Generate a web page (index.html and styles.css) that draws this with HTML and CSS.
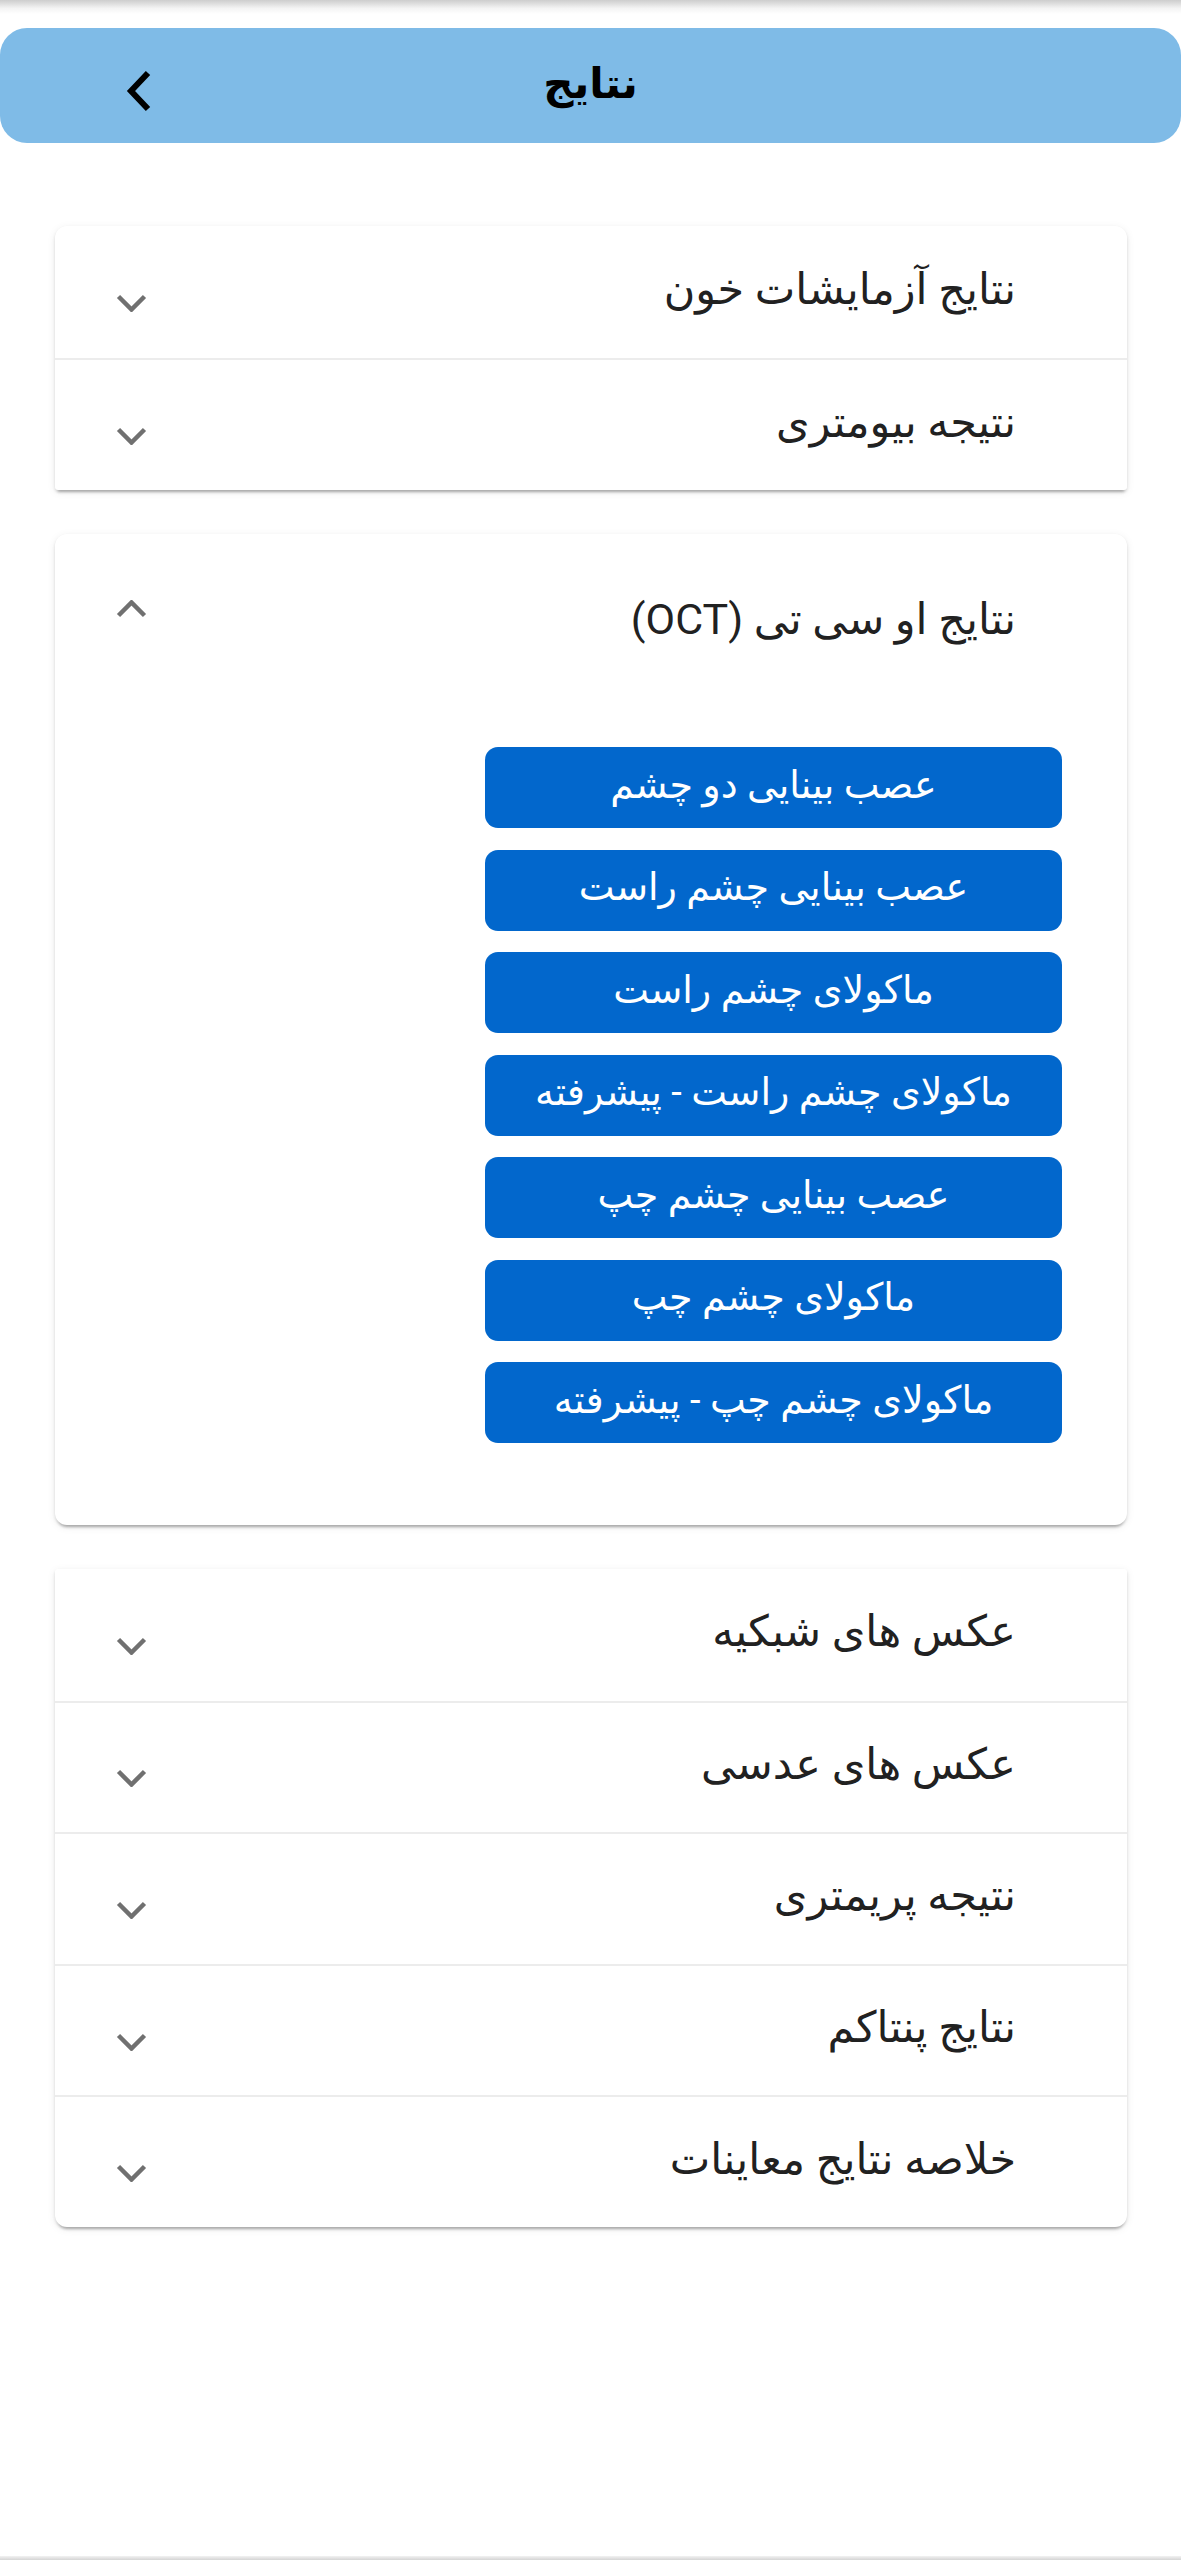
FILE: index.html
```html
<!DOCTYPE html>
<html lang="fa">
<head>
<meta charset="utf-8">
<title>نتایج</title>
<link rel="stylesheet" href="styles.css">
</head>
<body>
<div class="page">
  <div class="top-shade"></div>
  <header class="app-bar">
    <button class="back" aria-label="back">
      <svg width="30" height="44" viewBox="0 0 30 44"><path d="M25 4 L8 22 L25 40" fill="none" stroke="#000" stroke-width="6"/></svg>
    </button>
    <h1 class="title">نتایج</h1>
    <span></span>
  </header>

  <main class="content">
    <section class="card card-first">
      <div class="row">
        <span class="label">نتایج آزمایشات خون</span>
        <svg class="chev" width="31" height="18" viewBox="0 0 31 18"><path d="M2.5 2.5 L15.5 15.5 L28.5 2.5" fill="none" stroke="#707070" stroke-width="4.5"/></svg>
      </div>
      <div class="row divided">
        <span class="label">نتیجه بیومتری</span>
        <svg class="chev" width="31" height="18" viewBox="0 0 31 18"><path d="M2.5 2.5 L15.5 15.5 L28.5 2.5" fill="none" stroke="#707070" stroke-width="4.5"/></svg>
      </div>
    </section>

    <section class="card card-open">
      <div class="row row-open">
        <span class="label">نتایج او سی تی (OCT)</span>
        <svg class="chev chev-up" width="31" height="18" viewBox="0 0 31 18"><path d="M2.5 15.5 L15.5 2.5 L28.5 15.5" fill="none" stroke="#707070" stroke-width="4.5"/></svg>
      </div>
      <div class="details">
        <button class="btn">عصب بینایی دو چشم</button>
        <button class="btn">عصب بینایی چشم راست</button>
        <button class="btn">ماکولای چشم راست</button>
        <button class="btn">ماکولای چشم راست - پیشرفته</button>
        <button class="btn">عصب بینایی چشم چپ</button>
        <button class="btn">ماکولای چشم چپ</button>
        <button class="btn">ماکولای چشم چپ - پیشرفته</button>
      </div>
    </section>

    <section class="card card-last">
      <div class="row">
        <span class="label">عکس های شبکیه</span>
        <svg class="chev" width="31" height="18" viewBox="0 0 31 18"><path d="M2.5 2.5 L15.5 15.5 L28.5 2.5" fill="none" stroke="#707070" stroke-width="4.5"/></svg>
      </div>
      <div class="row divided">
        <span class="label">عکس های عدسی</span>
        <svg class="chev" width="31" height="18" viewBox="0 0 31 18"><path d="M2.5 2.5 L15.5 15.5 L28.5 2.5" fill="none" stroke="#707070" stroke-width="4.5"/></svg>
      </div>
      <div class="row divided">
        <span class="label">نتیجه پریمتری</span>
        <svg class="chev" width="31" height="18" viewBox="0 0 31 18"><path d="M2.5 2.5 L15.5 15.5 L28.5 2.5" fill="none" stroke="#707070" stroke-width="4.5"/></svg>
      </div>
      <div class="row divided">
        <span class="label">نتایج پنتاکم</span>
        <svg class="chev" width="31" height="18" viewBox="0 0 31 18"><path d="M2.5 2.5 L15.5 15.5 L28.5 2.5" fill="none" stroke="#707070" stroke-width="4.5"/></svg>
      </div>
      <div class="row divided">
        <span class="label">خلاصه نتایج معاینات</span>
        <svg class="chev" width="31" height="18" viewBox="0 0 31 18"><path d="M2.5 2.5 L15.5 15.5 L28.5 2.5" fill="none" stroke="#707070" stroke-width="4.5"/></svg>
      </div>
    </section>
  </main>

  <div class="bottom-edge"></div>
</div>
</body>
</html>
```

FILE: styles.css
```css
* { box-sizing: border-box; }

html, body {
  margin: 0;
  padding: 0;
  background: #ffffff;
}

body {
  font-family: "Roboto", "DejaVu Sans", sans-serif;
  color: #212121;
}

.page {
  min-height: 2560px;
  display: flex;
  flex-direction: column;
}

.top-shade {
  height: 14px;
  background: linear-gradient(to bottom, #cdcdcd, #f4f4f4 60%, #ffffff);
}

.app-bar {
  margin-top: 14px;
  height: 115px;
  background: #7fbbe7;
  border-radius: 27px;
  display: grid;
  grid-template-columns: 1fr auto 1fr;
  align-items: center;
}

.back {
  justify-self: start;
  margin-left: 123px;
  margin-top: 10px;
  background: none;
  border: 0;
  padding: 0;
  display: flex;
  align-items: center;
}

.title {
  margin: 0 0 4px;
  font-size: 42px;
  font-weight: bold;
  color: #000;
  direction: rtl;
  line-height: 1;
}

.content {
  padding: 83px 54px 0 55px;
  display: flex;
  flex-direction: column;
  gap: 44px;
}

.card {
  background: #fff;
  box-shadow: 0 5px 3px -3px rgba(0,0,0,0.22), 0 2px 3px 0 rgba(0,0,0,0.12), 0 2px 9px 0 rgba(0,0,0,0.08);
  direction: rtl;
}

.card-first { border-radius: 12px 12px 3px 3px; }
.card-open { border-radius: 12px; }
.card-last { border-radius: 3px 3px 12px 12px; }

.row {
  height: 132px;
  display: flex;
  align-items: center;
  justify-content: space-between;
  padding: 0 111px 0 61px;
}

.card-last .row { height: 131.6px; }

.divided {
  border-top: 2px solid #ececec;
}

.label {
  font-size: 43px;
  line-height: 1;
  color: #212121;
  margin-top: -6px;
}

.chev {
  flex: none;
  margin-top: 22px;
}

.row-open {
  height: 176px;
}

.chev-up {
  margin-top: -26px;
}

.details {
  display: flex;
  flex-direction: column;
  align-items: flex-start;
  gap: 21.5px;
  padding: 37px 65px 82px 0;
}

.btn {
  width: 577px;
  height: 81px;
  border: 0;
  border-radius: 13px;
  background: #0267cc;
  color: #fff;
  font-family: "Roboto", "DejaVu Sans", sans-serif;
  font-size: 38px;
  direction: rtl;
  padding: 0 0 6px;
}

.bottom-edge {
  margin-top: auto;
  height: 4px;
  background: linear-gradient(to bottom, #f2f2f2, #d4d4d4);
}
```
